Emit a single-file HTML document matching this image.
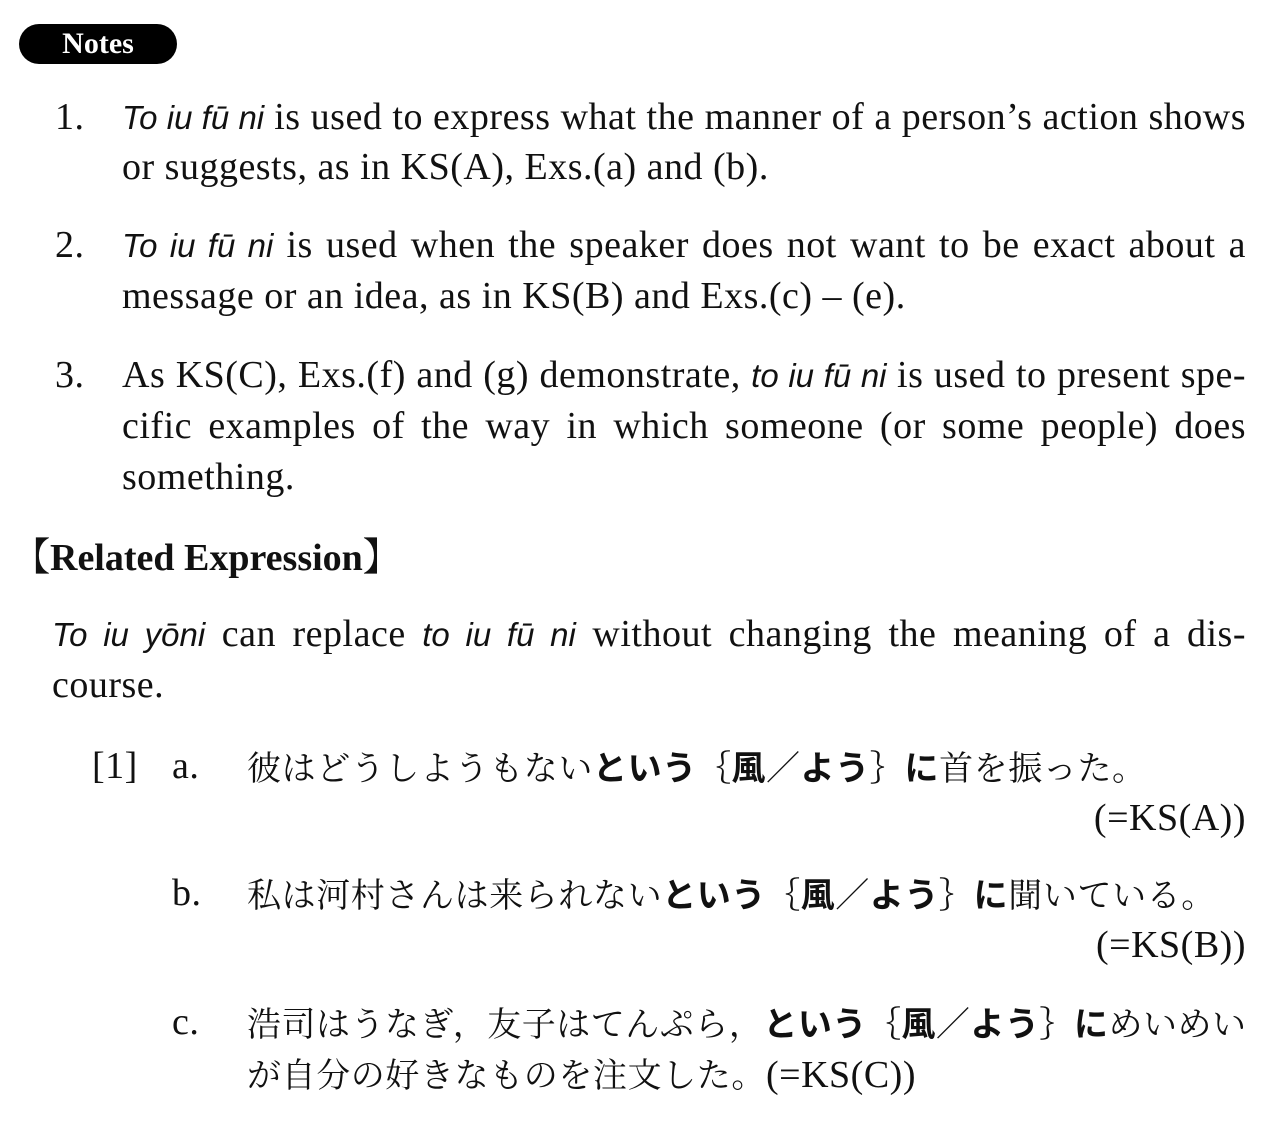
<!DOCTYPE html>
<html><head><meta charset="utf-8"><style>
body{margin:0;background:#fff;width:1272px;height:1128px;position:relative;overflow:hidden;color:#111;font-family:"Liberation Serif","Noto Serif CJK SC",serif;font-size:38px;letter-spacing:0.5px}
.l{position:absolute;height:52px;line-height:52px;white-space:nowrap}
.j{text-align:justify;text-align-last:justify;white-space:normal}
.s{font-family:"Liberation Sans",sans-serif;font-style:italic;font-size:33px;letter-spacing:0}
.jp{font-family:"Liberation Serif","Noto Serif CJK JP",serif;font-size:34px;letter-spacing:0.6px}
.jp .e{font-size:38px;letter-spacing:0.5px}
.b{font-family:"Noto Sans CJK JP",sans-serif;font-weight:bold}
#notes{position:absolute;left:19px;top:24px;width:158px;height:40px;background:#000;border-radius:20px;color:#fff;font-weight:bold;font-size:30px;line-height:40px;text-align:center;letter-spacing:0}
</style></head><body>
<div id="notes">Notes</div>
<div class="l" style="left:55px;top:91px">1.</div>
<div class="l j" style="left:122px;top:91px;width:1124px"><span class="s">To iu fū ni</span> is used to express what the manner of a person’s action shows</div>
<div class="l" style="left:122px;top:141px">or suggests, as in KS(A), Exs.(a) and (b).</div>
<div class="l" style="left:55px;top:219px">2.</div>
<div class="l j" style="left:122px;top:219px;width:1124px"><span class="s">To iu fū ni</span> is used when the speaker does not want to be exact about a</div>
<div class="l" style="left:122px;top:270px">message or an idea, as in KS(B) and Exs.(c) – (e).</div>
<div class="l" style="left:55px;top:349px">3.</div>
<div class="l j" style="left:122px;top:349px;width:1124px">As KS(C), Exs.(f) and (g) demonstrate, <span class="s">to iu fū ni</span> is used to present spe-</div>
<div class="l j" style="left:122px;top:400px;width:1124px">cific examples of the way in which someone (or some people) does</div>
<div class="l" style="left:122px;top:451px">something.</div>
<div class="l" style="left:12px;top:532px;font-weight:bold;letter-spacing:0">【Related Expression】</div>
<div class="l j" style="left:52px;top:608px;width:1194px"><span class="s">To iu yōni</span> can replace <span class="s">to iu fū ni</span> without changing the meaning of a dis-</div>
<div class="l" style="left:52px;top:659px">course.</div>
<div class="l" style="left:92px;top:740px">[1]</div>
<div class="l" style="left:172px;top:740px">a.</div>
<div class="l jp" style="left:247px;top:740px">彼はどうしようもない<span class="b">という</span>｛<span class="b">風</span>／<span class="b">よう</span>｝<span class="b">に</span>首を振った。</div>
<div class="l" style="right:26px;top:792px">(=KS(A))</div>
<div class="l" style="left:172px;top:867px">b.</div>
<div class="l jp" style="left:247px;top:867px">私は河村さんは来られない<span class="b">という</span>｛<span class="b">風</span>／<span class="b">よう</span>｝<span class="b">に</span>聞いている。</div>
<div class="l" style="right:26px;top:919px">(=KS(B))</div>
<div class="l" style="left:172px;top:996px">c.</div>
<div class="l jp j" style="left:247px;top:996px;width:999px;letter-spacing:0">浩司はうなぎ，友子はてんぷら，<span class="b">という</span>｛<span class="b">風</span>／<span class="b">よう</span>｝<span class="b">に</span>めいめい</div>
<div class="l jp" style="left:247px;top:1049px">が自分の好きなものを注文した。<span class="e">(=KS(C))</span></div>
</body></html>
